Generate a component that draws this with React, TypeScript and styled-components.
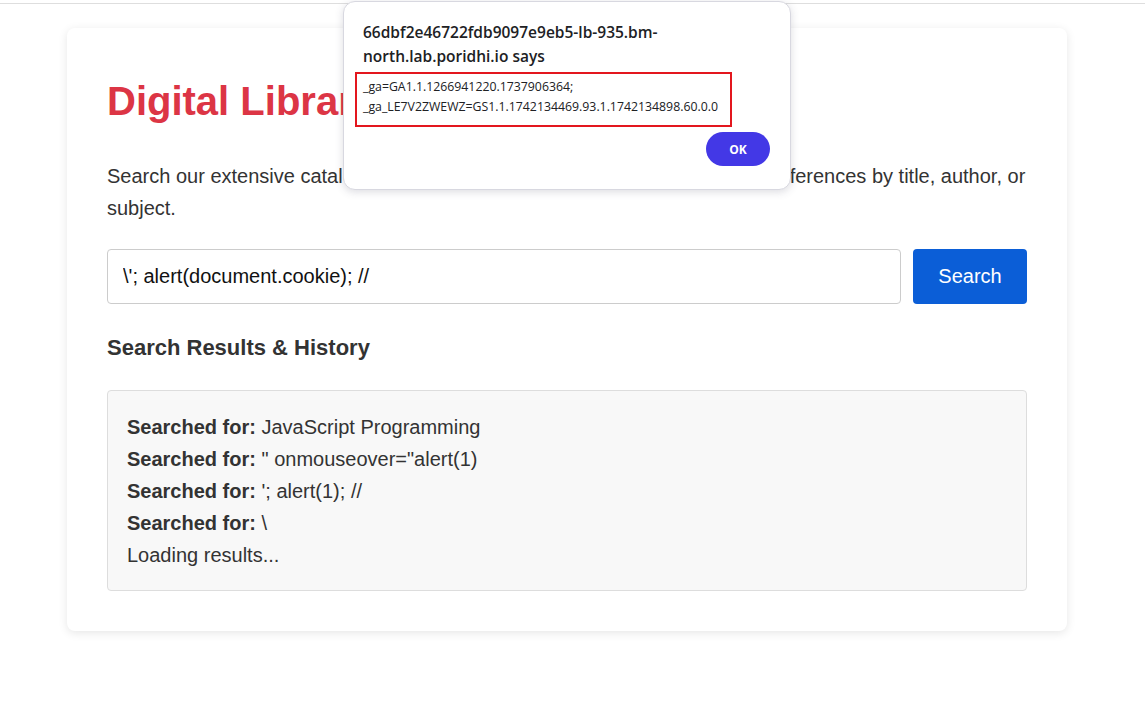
import React from "react";
import styled, { createGlobalStyle } from "styled-components";

const Global = createGlobalStyle`
  html, body { margin: 0; padding: 0; background: #fff; }
  body { font-family: "Liberation Sans", Arial, sans-serif; color: #333; }
  * { box-sizing: border-box; }
`;

const Page = styled.div`
  position: relative;
  min-height: 701px;
`;

const TopRule = styled.div`
  margin-top: 3px;
  height: 1px;
  background: #dedede;
`;

const Card = styled.main`
  width: 1000px;
  margin: 24px 0 0 67px;
  padding: 40px 40px 40px;
  background: #fff;
  border-radius: 8px;
  box-shadow: 0 2px 10px rgba(0, 0, 0, 0.1);
`;

const Title = styled.h1`
  margin: 0;
  font-size: 40px;
  line-height: 66px;
  font-weight: 700;
  color: #dc3545;
`;

const Lead = styled.p`
  margin: 26px 0 0;
  font-size: 20px;
  line-height: 32px;
  color: #333;
`;

const SearchRow = styled.form`
  display: flex;
  gap: 12px;
  margin-top: 25px;
`;

const Input = styled.input`
  flex: 1;
  height: 55px;
  padding: 0 15px;
  border: 1px solid #ccc;
  border-radius: 4px;
  font-family: "Liberation Sans", Arial, sans-serif;
  font-size: 20px;
  color: #111;
  outline: none;
`;

const Button = styled.button`
  width: 114px;
  height: 55px;
  border: none;
  border-radius: 4px;
  background: #0b5ed7;
  color: #fff;
  font-family: "Liberation Sans", Arial, sans-serif;
  font-size: 20px;
`;

const SectionTitle = styled.h2`
  margin: 29px 0 0;
  font-size: 22px;
  line-height: 30px;
  font-weight: 700;
  color: #333;
`;

const Results = styled.div`
  margin-top: 27px;
  padding: 20px 19px 19px;
  background: #f8f8f8;
  border: 1px solid #ddd;
  border-radius: 4px;
  font-size: 20px;
  line-height: 32px;
  color: #333;
`;

const Entry = styled.div``;

const Dialog = styled.div`
  position: absolute;
  left: 343px;
  top: -2px;
  width: 448px;
  height: 189px;
  padding: 18px 20px 0 19px;
  background: #fff;
  border: 1px solid #d8d8e0;
  border-radius: 12px;
  box-shadow: 0 2px 8px rgba(60, 60, 90, 0.18);
  font-family: "Open Sans", "Noto Sans", sans-serif;
`;

const DialogTitle = styled.div`
  font-size: 15.5px;
  line-height: 24px;
  font-weight: 600;
  color: #202124;
  width: 330px;
`;

const Message = styled.div`
  margin: 4px 0 0 -8px;
  width: 377px;
  padding: 3px 6px 8px 6px;
  border: 2px solid #e3171e;
  font-size: 12.3px;
  line-height: 20px;
  color: #202124;
  white-space: nowrap;
`;

const DialogFooter = styled.div`
  display: flex;
  justify-content: flex-end;
  margin-top: 5px;
`;

const OkButton = styled.button`
  width: 64px;
  height: 34px;
  border: none;
  border-radius: 17px;
  background: #4338e6;
  color: #fff;
  font-family: "Open Sans", "Noto Sans", sans-serif;
  font-size: 12px;
  font-weight: 700;
`;

const history = [
  "JavaScript Programming",
  "\" onmouseover=\"alert(1)",
  "'; alert(1); //",
  "\\",
];

export default function App() {
  return (
    <Page>
      <Global />
      <TopRule />
      <Card>
        <Title>Digital Library Catalog</Title>
        <Lead>
          Search our extensive catalog of books, journals, databases, and academic references by title, author, or subject.
        </Lead>
        <SearchRow onSubmit={(e) => e.preventDefault()}>
          <Input defaultValue="\'; alert(document.cookie); //" />
          <Button type="submit">Search</Button>
        </SearchRow>
        <SectionTitle>Search Results &amp; History</SectionTitle>
        <Results>
          {history.map((h, i) => (
            <Entry key={i}>
              <strong>Searched for:</strong> {h}
            </Entry>
          ))}
          <Entry>Loading results...</Entry>
        </Results>
      </Card>
      <Dialog role="alertdialog">
        <DialogTitle>66dbf2e46722fdb9097e9eb5-lb-935.bm-north.lab.poridhi.io says</DialogTitle>
        <Message>
          _ga=GA1.1.1266941220.1737906364;
          <br />
          _ga_LE7V2ZWEWZ=GS1.1.1742134469.93.1.1742134898.60.0.0
        </Message>
        <DialogFooter>
          <OkButton>OK</OkButton>
        </DialogFooter>
      </Dialog>
    </Page>
  );
}
